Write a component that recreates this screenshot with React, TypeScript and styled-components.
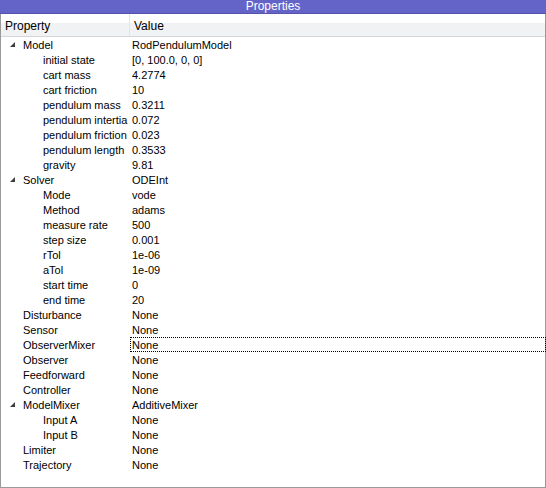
import React from 'react'
import styled, { createGlobalStyle } from 'styled-components'

const GlobalStyle = createGlobalStyle`
  html, body {
    margin: 0;
    padding: 0;
    background: #ffffff;
  }
  body {
    font-family: 'Liberation Sans', Arial, sans-serif;
  }
`

type Item = {
  name: string
  value: string
  children?: Item[]
  focused?: boolean
}

const items: Item[] = [
  {
    name: 'Model',
    value: 'RodPendulumModel',
    children: [
      { name: 'initial state', value: '[0, 100.0, 0, 0]' },
      { name: 'cart mass', value: '4.2774' },
      { name: 'cart friction', value: '10' },
      { name: 'pendulum mass', value: '0.3211' },
      { name: 'pendulum intertia', value: '0.072' },
      { name: 'pendulum friction', value: '0.023' },
      { name: 'pendulum length', value: '0.3533' },
      { name: 'gravity', value: '9.81' },
    ],
  },
  {
    name: 'Solver',
    value: 'ODEInt',
    children: [
      { name: 'Mode', value: 'vode' },
      { name: 'Method', value: 'adams' },
      { name: 'measure rate', value: '500' },
      { name: 'step size', value: '0.001' },
      { name: 'rTol', value: '1e-06' },
      { name: 'aTol', value: '1e-09' },
      { name: 'start time', value: '0' },
      { name: 'end time', value: '20' },
    ],
  },
  { name: 'Disturbance', value: 'None' },
  { name: 'Sensor', value: 'None' },
  { name: 'ObserverMixer', value: 'None', focused: true },
  { name: 'Observer', value: 'None' },
  { name: 'Feedforward', value: 'None' },
  { name: 'Controller', value: 'None' },
  {
    name: 'ModelMixer',
    value: 'AdditiveMixer',
    children: [
      { name: 'Input A', value: 'None' },
      { name: 'Input B', value: 'None' },
    ],
  },
  { name: 'Limiter', value: 'None' },
  { name: 'Trajectory', value: 'None' },
]

const Window = styled.div`
  width: 546px;
  height: 488px;
  display: flex;
  flex-direction: column;
  box-sizing: border-box;
  overflow: hidden;
`

const TitleBar = styled.div`
  height: 13px;
  background: #6464c8;
  border-bottom: 1px solid #5454a8;
  color: #ffffff;
  font-size: 12px;
  line-height: 13px;
  text-align: center;
`

const Frame = styled.div`
  flex: 1;
  display: flex;
  flex-direction: column;
  border: 1px solid #9a9a9a;
  border-top: none;
  background: #ffffff;
`

const Header = styled.div`
  height: 22px;
  display: grid;
  grid-template-columns: 129px 1fr;
  background: linear-gradient(#ffffff 0%, #ffffff 40%, #f1f2f4 41%, #f1f2f4 100%);
  border-bottom: 1px solid #d5d5d5;
  font-size: 12px;
  color: #000000;
`

const HeaderCell = styled.div<{ $divider?: boolean }>`
  display: flex;
  align-items: center;
  padding-left: 4px;
  padding-top: 1px;
  border-right: ${({ $divider }) => ($divider ? '1px solid #e3e4e6' : 'none')};
`

const Body = styled.div`
  display: flex;
  flex-direction: column;
`

const Row = styled.div`
  height: 15px;
  display: grid;
  grid-template-columns: 129px 1fr;
  font-size: 11px;
  color: #000000;
`

const NameCell = styled.div<{ $indent: number }>`
  display: flex;
  align-items: center;
  padding-left: ${({ $indent }) => $indent}px;
  white-space: nowrap;
  overflow: hidden;
`

const Arrow = styled.span`
  width: 5px;
  height: 5px;
  margin-left: -13px;
  margin-right: 8px;
  display: inline-flex;
`

const ValueCell = styled.div<{ $focused?: boolean }>`
  display: flex;
  align-items: center;
  padding-left: ${({ $focused }) => ($focused ? '1px' : '2px')};
  margin-right: -1px;
  border: ${({ $focused }) => ($focused ? '1px dotted #000000' : 'none')};
  white-space: nowrap;
`

const ExpandArrow = () => (
  <Arrow>
    <svg width="5" height="5" viewBox="0 0 5 5">
      <polygon points="5,0 5,5 0,5" fill="#3c3c3c" />
    </svg>
  </Arrow>
)

const renderItems = (list: Item[], indent: number): React.ReactNode[] =>
  list.flatMap((item) => {
    const row = (
      <Row key={item.name}>
        <NameCell $indent={indent}>
          {item.children && <ExpandArrow />}
          {item.name}
        </NameCell>
        <ValueCell $focused={item.focused}>{item.value}</ValueCell>
      </Row>
    )
    return item.children ? [row, ...renderItems(item.children, indent + 20)] : [row]
  })

export default function App() {
  return (
    <>
      <GlobalStyle />
      <Window>
        <TitleBar>Properties</TitleBar>
        <Frame>
          <Header>
            <HeaderCell $divider>Property</HeaderCell>
            <HeaderCell>Value</HeaderCell>
          </Header>
          <Body>{renderItems(items, 22)}</Body>
        </Frame>
      </Window>
    </>
  )
}
